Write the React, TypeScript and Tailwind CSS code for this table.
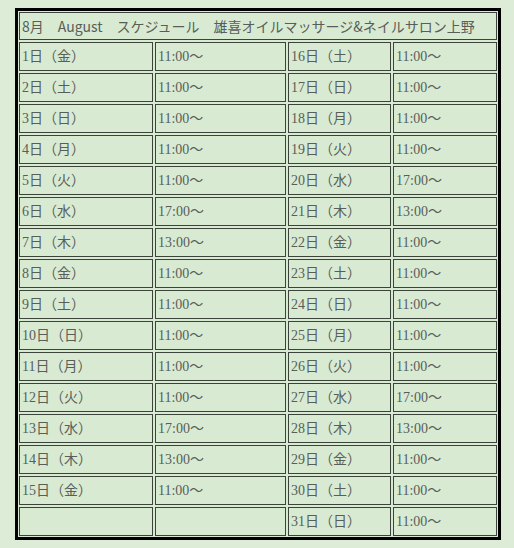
const rows: [string, string, string, string][] = [
  ['1日（金）', '11:00～', '16日（土）', '11:00～'],
  ['2日（土）', '11:00～', '17日（日）', '11:00～'],
  ['3日（日）', '11:00～', '18日（月）', '11:00～'],
  ['4日（月）', '11:00～', '19日（火）', '11:00～'],
  ['5日（火）', '11:00～', '20日（水）', '17:00～'],
  ['6日（水）', '17:00～', '21日（木）', '13:00～'],
  ['7日（木）', '13:00～', '22日（金）', '11:00～'],
  ['8日（金）', '11:00～', '23日（土）', '11:00～'],
  ['9日（土）', '11:00～', '24日（日）', '11:00～'],
  ['10日（日）', '11:00～', '25日（月）', '11:00～'],
  ['11日（月）', '11:00～', '26日（火）', '11:00～'],
  ['12日（火）', '11:00～', '27日（水）', '17:00～'],
  ['13日（水）', '17:00～', '28日（木）', '13:00～'],
  ['14日（木）', '13:00～', '29日（金）', '11:00～'],
  ['15日（金）', '11:00～', '30日（土）', '11:00～'],
  ['', '', '31日（日）', '11:00～'],
]

const cell = 'flex items-center border border-[#3b433b] bg-[#d9ead3] pl-[2px] text-[14px] text-[#585e58] whitespace-nowrap'

export default function App() {
  return (
    <div className="min-h-[548px] w-[514px] bg-[#dcecd6] pt-[8px] pl-[15px]">
      <div className="inline-block border-[3px] border-black bg-[#d9ead3] p-px">
        <div
          className="grid grid-cols-[134px_131px_103px_104px] gap-[2px]"
          style={{ fontFamily: '"Liberation Serif", "Noto Sans CJK JP", serif' }}
        >
          <div
            className={`${cell} col-span-4 h-[28px]`}
            style={{ fontFamily: '"Noto Sans CJK JP", sans-serif' }}
          >
            8月　August　スケジュール　雄喜オイルマッサージ&amp;ネイルサロン上野
          </div>
          {rows.map((r, i) =>
            r.map((t, j) => (
              <div key={`${i}-${j}`} className={`${cell} h-[29px]`}>
                {t}
              </div>
            )),
          )}
        </div>
      </div>
    </div>
  )
}
